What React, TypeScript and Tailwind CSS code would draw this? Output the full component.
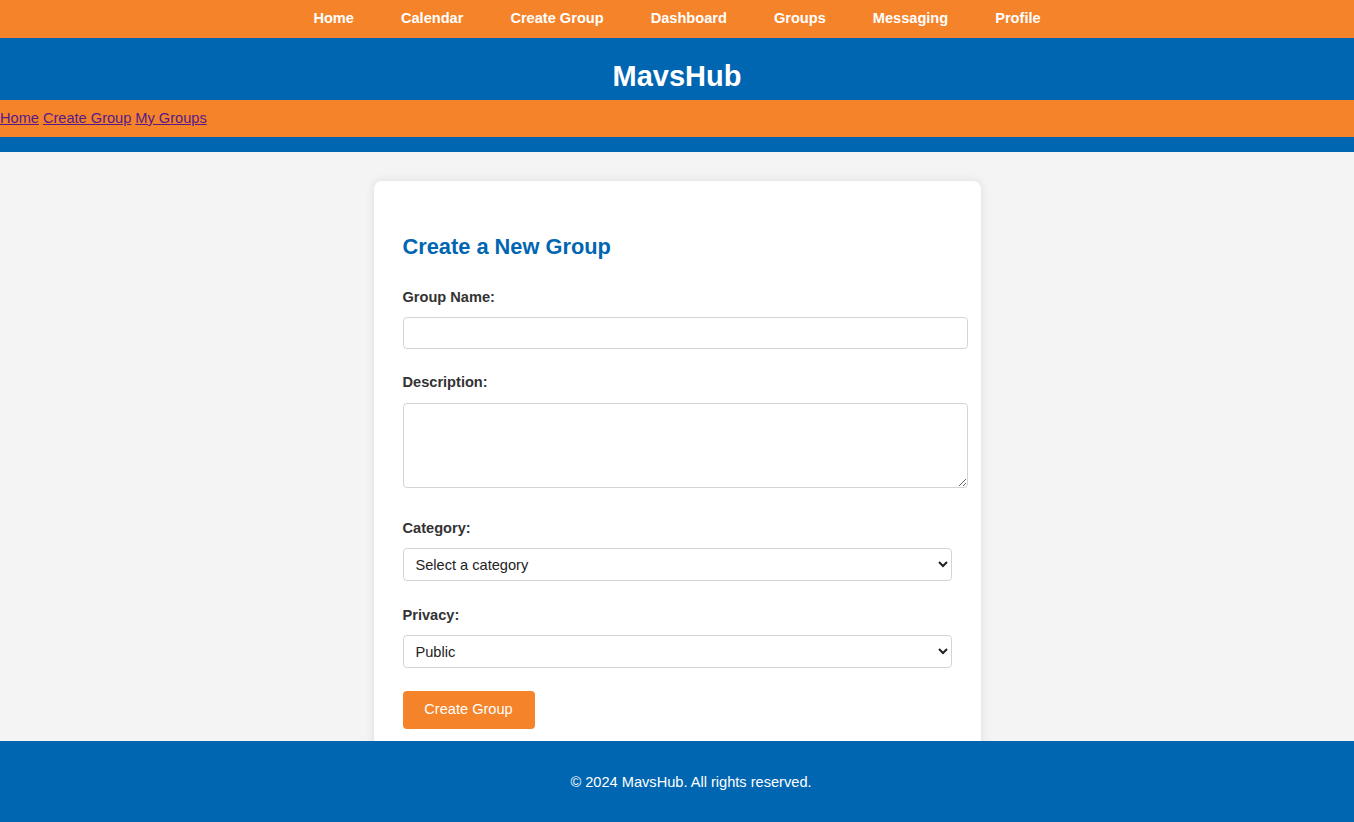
const navItems = ['Home', 'Calendar', 'Create Group', 'Dashboard', 'Groups', 'Messaging', 'Profile'];
const crumbs = ['Home', 'Create Group', 'My Groups'];

function Label({ children }: { children: string }) {
  return (
    <label className="block text-[14.6px] font-bold leading-[17px] text-[#333]">{children}</label>
  );
}

export default function App() {
  return (
    <div className="min-h-[822px] bg-[#f4f4f4] font-['Liberation_Sans',Arial,sans-serif] text-[14.6px]">
      <nav className="flex h-[38px] items-center justify-center gap-[47px] bg-[#f5832a]">
        {navItems.map((item) => (
          <a key={item} href="#" className="text-[14.6px] font-bold text-white">
            {item}
          </a>
        ))}
      </nav>

      <header className="bg-[#0066b2]">
        <h1 className="flex h-[62px] items-center justify-center pt-[15px] text-[29px] font-bold text-white">MavsHub</h1>
        <div className="flex h-[37px] items-center gap-[4px] bg-[#f5832a]">
          {crumbs.map((c) => (
            <a key={c} href="#" className="text-[14.6px] text-[#551a8b] underline">
              {c}
            </a>
          ))}
        </div>
        <div className="h-[15px]" />
      </header>

      <main className="flex justify-center pt-[29px]">
        <div className="w-[607px] rounded-[8px] bg-white pb-[40px] pl-[29px] pt-[53px] shadow-[0_0_10px_rgba(0,0,0,0.1)]">
          <h2 className="text-[21.8px] font-bold leading-[25px] text-[#0066b2]">Create a New Group</h2>

          <form className="flex flex-col">
            <div className="mt-[30px]">
              <Label>Group Name:</Label>
            </div>
            <input
              type="text"
              className="mt-[11px] h-[32px] w-[565px] rounded-[4px] border border-[#d4d4d4] bg-white px-[9px]"
            />

            <div className="mt-[25px]">
              <Label>Description:</Label>
            </div>
            <textarea className="mt-[12px] block h-[85px] w-[565px] rounded-[4px] border border-[#d4d4d4] bg-white px-[9px]" />

            <div className="mt-[32px]">
              <Label>Category:</Label>
            </div>
            <select className="mt-[11px] h-[33px] w-[549px] rounded-[4px] border border-[#d4d4d4] bg-white px-[8px] text-[14.6px] text-[#222]">
              <option>Select a category</option>
              <option>Academic</option>
              <option>Sports</option>
              <option>Social</option>
            </select>

            <div className="mt-[26px]">
              <Label>Privacy:</Label>
            </div>
            <select className="mt-[11px] h-[33px] w-[549px] rounded-[4px] border border-[#d4d4d4] bg-white px-[8px] text-[14.6px] text-[#222]">
              <option>Public</option>
              <option>Private</option>
            </select>

            <button
              type="button"
              className="mt-[23px] h-[38px] w-[132px] rounded-[4px] bg-[#f5832a] text-[14.6px] text-white"
            >
              Create Group
            </button>
          </form>
        </div>
      </main>

      <footer className="fixed bottom-0 left-0 right-0 flex h-[81px] items-center justify-center bg-[#0066b2] pl-[28px] pt-[2px] text-[14.6px] text-white">
        © 2024 MavsHub. All rights reserved.
      </footer>
    </div>
  );
}
